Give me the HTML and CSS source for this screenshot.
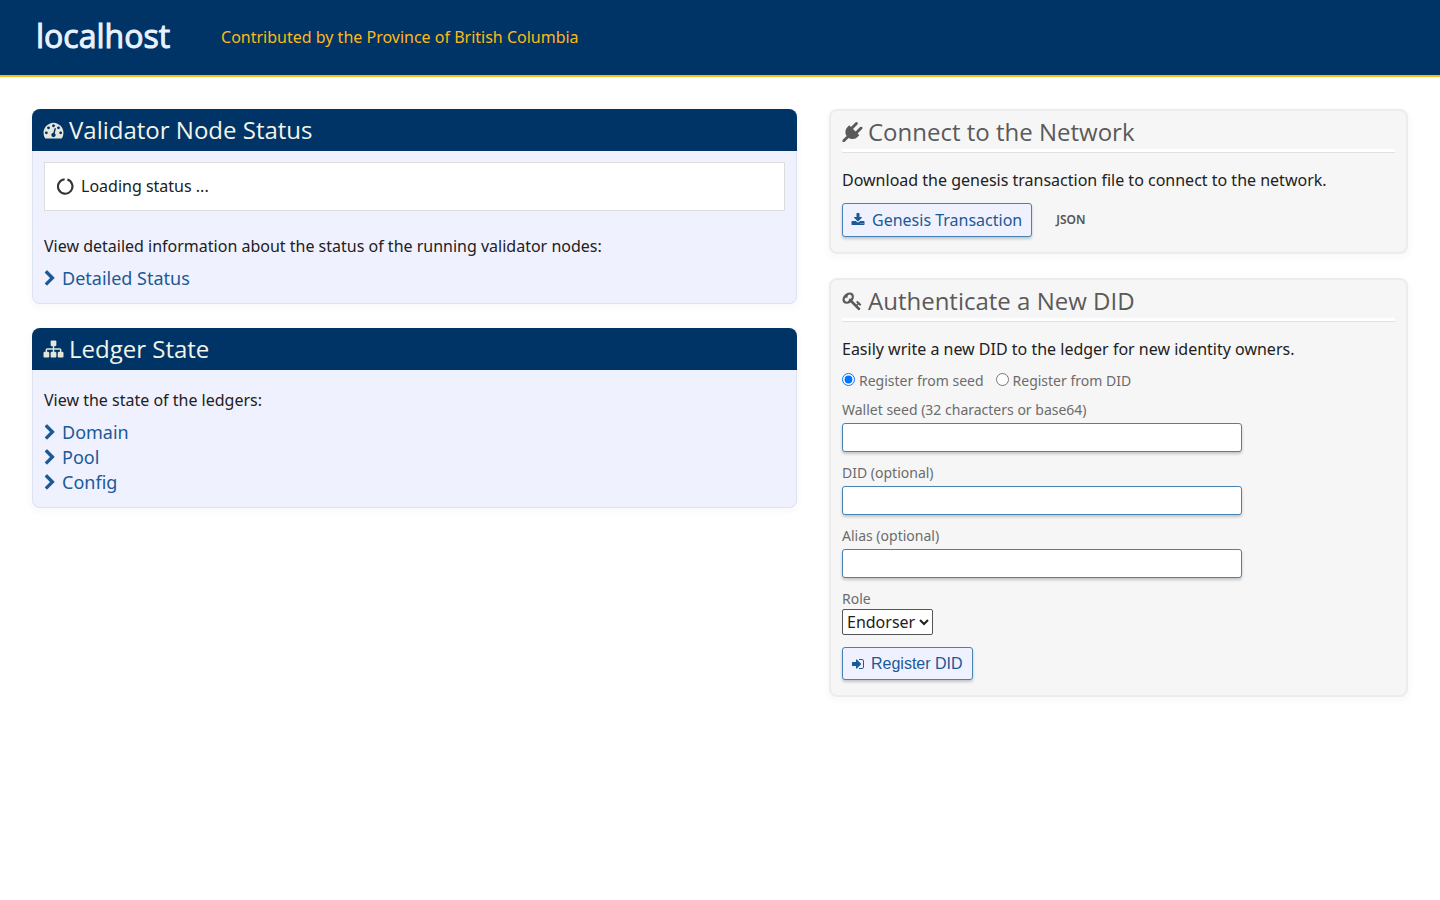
FILE: index.html
```html
<!DOCTYPE html>
<html lang="en">
<head>
<meta charset="utf-8">
<title>localhost</title>
<meta name="viewport" content="width=device-width, initial-scale=1">
<link rel="stylesheet" href="styles.css">
</head>
<body>
<svg class="sprite" aria-hidden="true">
  <symbol id="chevron" viewBox="256 0 1280 1792"><path d="M1363 877l-742 742q-19 19-45 19t-45-19l-166-166q-19-19-19-45t19-45l531-531-531-531q-19-19-19-45t19-45l166-166q19-19 45-19t45 19l742 742q19 19 19 45t-19 45z"/></symbol>
</svg>
<header class="site-header">
  <h1 class="brand">localhost</h1>
  <div class="tagline">Contributed by the Province of British Columbia</div>
</header>
<main class="columns">
  <div class="column">
    <section class="panel panel-blue">
      <h2 class="panel-title"><svg class="title-icon" viewBox="0 0 1792 1792" aria-hidden="true"><path d="M384 1152q0-53-37.500-90.500t-90.500-37.500-90.500 37.500-37.500 90.500 37.500 90.500 90.500 37.500 90.500-37.500 37.500-90.500zm192-448q0-53-37.500-90.500t-90.500-37.500-90.500 37.500-37.500 90.500 37.500 90.500 90.500 37.500 90.500-37.500 37.500-90.500zm428 481l101-382q6-26-7.500-48.500t-38.500-29.500-48 6.500-30 39.500l-101 382q-60 5-107 43.500t-63 98.500q-20 77 20 146t117 89 146-20 89-117q16-60-6-117t-72-91zm660-33q0-53-37.500-90.500t-90.500-37.500-90.500 37.500-37.500 90.500 37.500 90.500 90.500 37.500 90.500-37.500 37.500-90.500zm-640-640q0-53-37.500-90.500t-90.500-37.500-90.500 37.500-37.500 90.500 37.500 90.500 90.500 37.500 90.500-37.500 37.500-90.500zm448 192q0-53-37.500-90.500t-90.500-37.500-90.500 37.500-37.500 90.500 37.500 90.500 90.500 37.500 90.500-37.500 37.500-90.500zm320 448q0 261-141 483-19 29-54 29h-1402q-35 0-54-29-141-221-141-483 0-182 71-348t191-286 286-191 348-71 348 71 286 191 191 286 71 348z"/></svg>Validator Node Status</h2>
      <div class="panel-body">
        <div class="status-box"><svg class="spinner" viewBox="0 0 16 16" aria-hidden="true"><path d="M9.800 1.500A6.800 6.800 0 1 1 7.200 1.200"/></svg>Loading status ...</div>
        <p class="text">View detailed information about the status of the running validator nodes:</p>
        <ul class="links">
          <li><a href="#"><svg class="chevron" aria-hidden="true"><use href="#chevron"/></svg>Detailed Status</a></li>
        </ul>
      </div>
    </section>
    <section class="panel panel-blue">
      <h2 class="panel-title"><svg class="title-icon" viewBox="0 0 1792 1792" aria-hidden="true"><path d="M1792 1248v320q0 40-28 68t-68 28h-320q-40 0-68-28t-28-68v-320q0-40 28-68t68-28h96v-192h-512v192h96q40 0 68 28t28 68v320q0 40-28 68t-68 28h-320q-40 0-68-28t-28-68v-320q0-40 28-68t68-28h96v-192h-512v192h96q40 0 68 28t28 68v320q0 40-28 68t-68 28h-320q-40 0-68-28t-28-68v-320q0-40 28-68t68-28h96v-192q0-52 38-90t90-38h512v-192h-96q-40 0-68-28t-28-68v-320q0-40 28-68t68-28h320q40 0 68 28t28 68v320q0 40-28 68t-68 28h-96v192h512q52 0 90 38t38 90v192h96q40 0 68 28t28 68z"/></svg>Ledger State</h2>
      <div class="panel-body">
        <p class="text">View the state of the ledgers:</p>
        <ul class="links">
          <li><a href="#"><svg class="chevron" aria-hidden="true"><use href="#chevron"/></svg>Domain</a></li>
          <li><a href="#"><svg class="chevron" aria-hidden="true"><use href="#chevron"/></svg>Pool</a></li>
          <li><a href="#"><svg class="chevron" aria-hidden="true"><use href="#chevron"/></svg>Config</a></li>
        </ul>
      </div>
    </section>
  </div>
  <div class="column">
    <section class="panel panel-gray">
      <h2 class="panel-title"><svg class="title-icon" viewBox="0 0 1792 1792" aria-hidden="true"><path d="M1755 453q37 38 37 90.500t-37 90.500l-401 400 150 150-160 160q-163 163-389.500 186.500t-411.500-100.500l-362 362h-181v-181l362-362q-124-185-100.500-411.500t186.500-389.500l160-160 150 150 400-401q38-37 91-37t90 37 37 90.500-37 90.500l-400 401 234 234 401-400q38-37 91-37t90 37z"/></svg>Connect to the Network</h2>
      <p class="text">Download the genesis transaction file to connect to the network.</p>
      <div class="download-row">
        <a class="button" href="#"><svg class="button-icon" viewBox="0 0 1792 1792" aria-hidden="true"><path d="M1344 1344q0-26-19-45t-45-19-45 19-19 45 19 45 45 19 45-19 19-45zm256 0q0-26-19-45t-45-19-45 19-19 45 19 45 45 19 45-19 19-45zm128-224v320q0 40-28 68t-68 28h-1472q-40 0-68-28t-28-68v-320q0-40 28-68t68-28h465l135 136q58 56 136 56t136-56l136-136h464q40 0 68 28t28 68zm-325-569q17 41-14 70l-448 448q-18 19-45 19t-45-19l-448-448q-31-29-14-70 17-39 59-39h256v-448q0-26 19-45t45-19h256q26 0 45 19t19 45v448h256q42 0 59 39z"/></svg>Genesis Transaction</a>
        <a class="json-link" href="#">JSON</a>
      </div>
    </section>
    <section class="panel panel-gray">
      <h2 class="panel-title"><svg class="title-icon" viewBox="0 0 1792 1792" aria-hidden="true"><path d="M832 512q0-80-56-136t-136-56-136 56-56 136q0 42 19 83-41-19-83-19-80 0-136 56t-56 136 56 136 136 56 136-56 56-136q0-42-19-83 41 19 83 19 80 0 136-56t56-136zm851 704q0 17-49 66t-66 49q-9 0-28.500-16t-36.500-33-38.500-40-24.500-26l-96 96 220 220q28 28 28 68 0 42-39 81t-81 39q-40 0-68-28l-671-671q-176 131-365 131-163 0-265.500-102.500t-102.500-265.500q0-160 95-313t248-248 313-95q163 0 265.500 102.500t102.500 265.500q0 189-131 365l355 355 96-96q-3-3-26-24.500t-40-38.500-33-36.500-16-28.500q0-17 49-66t66-49q13 0 23 10 6 6 46 44.500t82 79.500 86.500 86 73 78 28.500 41z"/></svg>Authenticate a New DID</h2>
      <p class="text">Easily write a new DID to the ledger for new identity owners.</p>
      <form class="did-form">
        <div class="radios">
          <label><input type="radio" name="source" checked>Register from seed</label>
          <label><input type="radio" name="source">Register from DID</label>
        </div>
        <div class="field"><label for="seed">Wallet seed (32 characters or base64)</label><input class="text-input" id="seed" type="text"></div>
        <div class="field"><label for="did">DID (optional)</label><input class="text-input" id="did" type="text"></div>
        <div class="field"><label for="alias">Alias (optional)</label><input class="text-input" id="alias" type="text"></div>
        <div class="field"><label for="role">Role</label><select class="role" id="role"><option>Endorser</option></select></div>
        <button class="button button-submit" type="button"><svg class="button-icon" viewBox="0 0 1792 1792" aria-hidden="true"><path d="M1312 896q0 26-19 45l-544 544q-19 19-45 19t-45-19-19-45v-288h-448q-26 0-45-19t-19-45v-384q0-26 19-45t45-19h448v-288q0-26 19-45t45-19 45 19l544 544q19 19 19 45zm352-352v704q0 119-84.500 203.500t-203.500 84.500h-320q-13 0-22.500-9.500t-9.500-22.500q0-4-1-20t-.5-26.500 3-23.500 10-19.500 20.500-6.500h320q66 0 113-47t47-113v-704q0-66-47-113t-113-47h-312l-11.500-1-11.500-3-8-5.500-7-9-2-13.500q0-4-1-20t-.5-26.500 3-23.500 10-19.500 20.500-6.500h320q119 0 203.500 84.500t84.500 203.500z"/></svg>Register DID</button>
      </form>
    </section>
  </div>
</main>
</body>
</html>
```
FILE: styles.css
```css
* { box-sizing: border-box; }
body {
  margin: 0;
  background: #fff;
  color: #212121;
  font: 16px/24px "Noto Sans", "Open Sans", sans-serif;
}
h1, h2, p, ul { margin: 0; padding: 0; font-weight: 400; }
h1, h2 { font-family: "Open Sans", "Noto Sans", sans-serif; }
a { color: #1a5a96; text-decoration: none; }
svg { fill: currentColor; flex: none; }
.sprite { display: none; }

.site-header {
  display: flex;
  align-items: center;
  gap: 51px;
  min-height: 77px;
  padding: 0 36px 2px;
  background: #003366;
  border-bottom: 2px solid #fcba19;
}
.brand {
  padding-bottom: 2px;
  color: #e8f2ff;
  font-size: 32px;
  line-height: 40px;
  -webkit-text-stroke: 1px #e8f2ff;
}
.tagline { color: #fcba19; }

.columns {
  display: grid;
  grid-template-columns: 765fr 579fr;
  gap: 32px;
  padding: 32px;
}
.column { display: flex; flex-direction: column; gap: 24px; }

.panel {
  border-radius: 8px;
  box-shadow: 0 3px 4px 3px rgba(0, 0, 0, 0.02);
}
.panel-title {
  display: flex;
  align-items: center;
  gap: 5px;
  font-size: 24px;
  line-height: 42px;
}
.title-icon { width: 21px; height: 20px; }

.panel-blue { background: #f0f1ff; }
.panel-blue .panel-title {
  padding: 0 11px;
  color: #f2f5e8;
  background: #003366;
  border-radius: 8px 8px 0 0;
}
.panel-blue .title-icon { color: #e2e6dc; }
.panel-body {
  padding: 11px 11px 12px;
  border: 1px solid #dce3f0;
  border-top: 0;
  border-radius: 0 0 8px 8px;
}
.status-box {
  display: flex;
  align-items: center;
  gap: 7px;
  margin-bottom: 16px;
  padding: 11px 12px 12px;
  background: #fff;
  border: 1px solid #ddd;
}
.spinner { width: 17px; height: 17px; fill: none; stroke: #333; stroke-width: 2; }
.text { padding: 7px 0 8px; }
.links { list-style: none; font-size: 18px; line-height: 25px; }
.links a { display: flex; align-items: center; gap: 6px; }
.chevron { width: 12px; height: 17px; }

.panel-gray {
  padding: 0 11px 15px;
  background: #f6f6f6;
  border: 2px solid #f0ebeb;
}
.panel-gray .panel-title {
  margin-bottom: 9px;
  padding-top: 4px;
  color: #5a5a5a;
  line-height: 34px;
  border-bottom: 3px solid #fff;
  box-shadow: 0 1px 0 #e2e0e0;
}
.download-row { display: flex; align-items: center; gap: 24px; margin-top: 3px; }
.button {
  display: inline-flex;
  align-items: center;
  gap: 7px;
  padding: 4px 9px 4px 8px;
  color: #1a5a96;
  background: #f0f1ff;
  border: 1px solid #4682b4;
  border-radius: 3px;
  box-shadow: 0 2px 3px rgba(0, 0, 0, 0.2);
}
.button-icon { width: 14px; height: 14px; }
.json-link { color: #555; font-size: 12px; font-weight: 600; }

.did-form { margin-top: 2px; color: #6c6c6c; font-size: 14px; line-height: 20px; }
.radios { display: flex; gap: 12px; margin-bottom: 9px; }
.radios label { display: flex; align-items: center; gap: 4px; }
.radios input { width: 13px; height: 13px; margin: 0 0 3px; }
.field { display: flex; flex-direction: column; align-items: flex-start; margin-bottom: 11px; }
.text-input {
  width: 400px;
  max-width: 100%;
  height: 29px;
  margin-top: 3px;
  padding: 2px 8px;
  background: #fff;
  border: 1px solid #4682b4;
  border-radius: 3px;
  box-shadow: 0 2px 3px rgba(0, 0, 0, 0.2);
  font: inherit;
}
.role {
  height: 26px;
  padding: 0;
  color: #212121;
  background: #fff;
  border: 1px solid #555;
  border-radius: 2px;
  font: 16px "Noto Sans", "Open Sans", sans-serif;
}
.button-submit { gap: 6px; margin-top: 1px; font: 16px/23px "Liberation Sans", Arial, sans-serif; }
```
